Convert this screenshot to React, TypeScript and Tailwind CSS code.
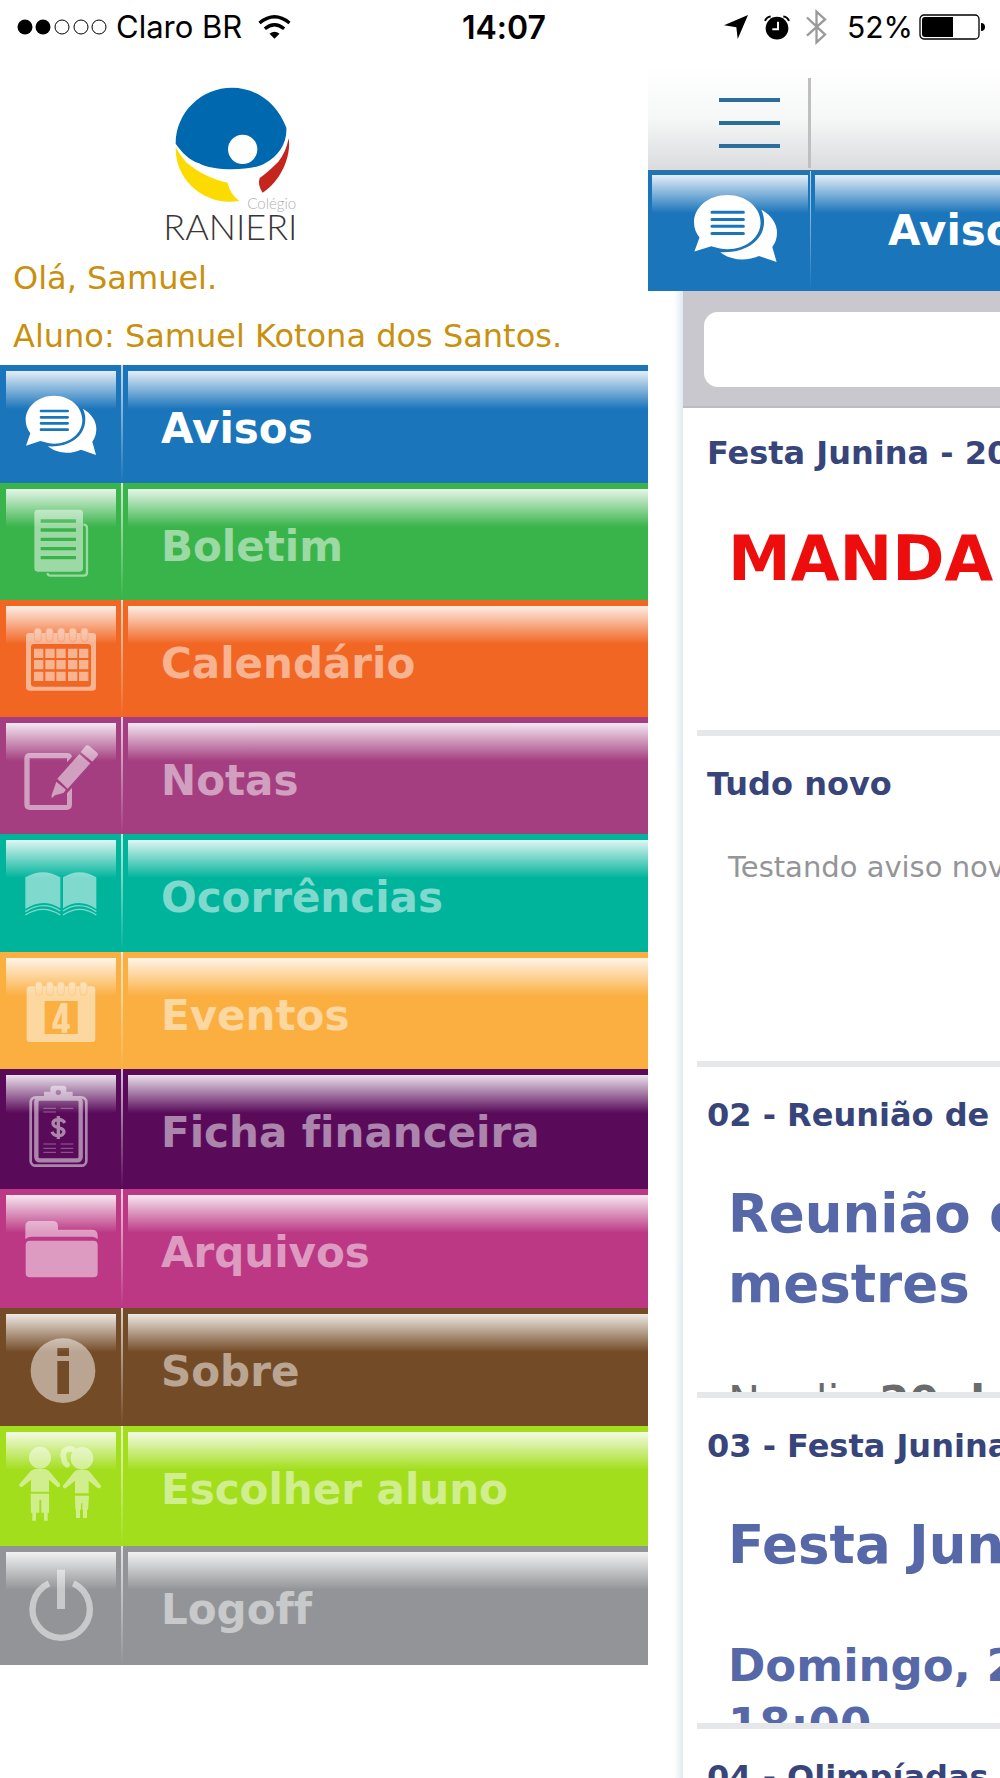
import type { ReactNode } from "react";

function ChatIcon({ line }: { line: string }) {
  return (
    <>
      <path
        fill="#fff"
        d="M162 107C210 107 247 140 247 180S210 251 162 251C151 251 138 248 121 243L78 257L91 220C82 208 77 195 77 180C77 140 114 107 162 107Z"
      />
      <path
        fill="#fff"
        d="M249 146C274 160 289 183 289 207C289 222 285 234 277 245L288 285L243 269C211 284 170 281 144 259C200 263 245 236 254 195C258 178 256 162 249 146Z"
      />
      <path stroke={line} strokeWidth="8" strokeLinecap="round" d="M123 153H203M123 172H203M123 190H203M123 209H203" />
    </>
  );
}

function Rings({ xs, y, stroke }: { xs: number[]; y: number; stroke: string }) {
  return (
    <>
      {xs.map((x) => (
        <rect key={x} x={x} y={y} width="21" height="40" rx="10" fill="#fff" stroke={stroke} strokeWidth="3" />
      ))}
    </>
  );
}

type Item = {
  label: string;
  color: string;
  height: string;
  viewBox: string;
  active?: boolean;
  icon: ReactNode;
};

const items: Item[] = [
  {
    label: "Avisos",
    color: "bg-[#1b75bb]",
    height: "h-[118px]",
    viewBox: "18 33 330 330",
    active: true,
    icon: <ChatIcon line="#1b75bb" />,
  },
  {
    label: "Boletim",
    color: "bg-[#39b44a]",
    height: "h-[117px]",
    viewBox: "18 387 330 330",
    icon: (
      <>
        <path
          fill="#fff"
          fillRule="evenodd"
          d="M113 449H239Q249 449 249 459V625Q249 635 239 635H113Q103 635 103 625V459Q103 449 113 449ZM122 478V488H228V478ZM122 505V515H228V505ZM122 533V543H228V533ZM122 561V571H228V561ZM122 588V598H228V588Z"
        />
        <path fill="none" stroke="#fff" strokeWidth="7" d="M250 494Q261 494 261 504V637Q261 647 251 647H151Q143 647 143 639" />
      </>
    ),
  },
  {
    label: "Calendário",
    color: "bg-[#f26623]",
    height: "h-[117px]",
    viewBox: "18 737 330 330",
    icon: (
      <>
        <path
          fill="#fff"
          fillRule="evenodd"
          d="M88 818H278Q288 818 288 828V981Q288 991 278 991H88Q78 991 78 981V828Q78 818 88 818ZM102 851Q93 851 93 860V970Q93 979 102 979H264Q273 979 273 970V860Q273 851 264 851Z"
        />
        <Rings xs={[103, 138, 173, 208, 243]} y={804} stroke="#fbd0b8" />
        <path
          fill="#fff"
          d="M102 865h28v28h-28zM136 865h28v28h-28zM169 865h28v28h-28zM204 865h28v28h-28zM237 865h28v28h-28zM102 899h28v28h-28zM136 899h28v28h-28zM169 899h28v28h-28zM204 899h28v28h-28zM237 899h28v28h-28zM102 934h28v28h-28zM136 934h28v28h-28zM169 934h28v28h-28zM204 934h28v28h-28zM237 934h28v28h-28z"
        />
      </>
    ),
  },
  {
    label: "Notas",
    color: "bg-[#a43e80]",
    height: "h-[117px]",
    viewBox: "18 24 330 330",
    icon: (
      <>
        <path
          fill="#fff"
          d="M90 114H202Q214 114 216 125L201 142V130H89V270H201V235L216 218V268Q216 285 199 285H90Q73 285 73 268V131Q73 114 90 114Z"
        />
        <path
          fill="#fff"
          d="M238 117L271 145L203 221L172 191ZM242 111L255 95Q261 87 269 94L290 112Q297 118 291 124L277 140ZM169 200L198 224L190 234L165 241L155 250V240Z"
        />
      </>
    ),
  },
  {
    label: "Ocorrências",
    color: "bg-[#00b49c]",
    height: "h-[118px]",
    viewBox: "18 375 330 330",
    icon: (
      <>
        <path fill="#fff" d="M76 487Q129 456 181 487V580Q129 547 76 582ZM189 487Q239 456 289 487V582Q239 547 189 580Z" />
        <path
          fill="none"
          stroke="#fff"
          strokeWidth="4"
          d="M76 590Q129 555 181 588M76 600Q129 566 181 600M189 588Q239 555 289 590M189 600Q239 566 289 600"
        />
      </>
    ),
  },
  {
    label: "Eventos",
    color: "bg-[#fbaf41]",
    height: "h-[117px]",
    viewBox: "18 729 330 330",
    icon: (
      <>
        <path
          fill="#fff"
          fillRule="evenodd"
          d="M90 814H276Q286 814 286 824V971Q286 981 276 981H90Q80 981 80 971V824Q80 814 90 814ZM134 858V957H233V858Z"
        />
        <Rings xs={[106, 139, 172, 206, 240]} y={801} stroke="#fde3bb" />
        <path fill="#fff" fillRule="evenodd" d="M182 864H202V928H209V941H202V953H185V941H157V926ZM185 892L171 928H185Z" />
      </>
    ),
  },
  {
    label: "Ficha financeira",
    color: "bg-[#590b5a]",
    height: "h-[120px]",
    viewBox: "18 45 330 330",
    icon: (
      <>
        <rect x="92" y="112" width="167" height="205" rx="15" fill="none" stroke="#fff" strokeWidth="8" />
        <rect x="109" y="116" width="133" height="185" rx="10" fill="none" stroke="#fff" strokeWidth="13" />
        <path
          fill="#fff"
          fillRule="evenodd"
          d="M132 120V95H151V85Q152 77 160 77H190Q198 77 199 85V95H218V120ZM175 89A8 8 0 1 0 175 105A8 8 0 1 0 175 89Z"
        />
        <path
          stroke="#fff"
          strokeWidth="3"
          opacity=".7"
          d="M130 145H168M182 145H220M130 156H168M130 252H168M182 252H220M130 265H168M182 265H220M130 277H168M182 277H220"
        />
        <path
          fill="none"
          stroke="#fff"
          strokeWidth="10"
          d="M194 189Q189 178 175 178Q159 179 159 190Q160 199 175 203Q192 207 192 216Q190 227 175 227Q160 227 156 215M175 168V237"
        />
      </>
    ),
  },
  {
    label: "Arquivos",
    color: "bg-[#bc3784]",
    height: "h-[119px]",
    viewBox: "18 405 330 330",
    icon: (
      <path
        fill="#fff"
        d="M76 538V499Q76 483 92 483H158Q174 483 174 499V509H276Q293 509 293 526V538Q287 530 277 530H93Q82 530 76 538ZM90 542H280Q293 542 293 555V639Q293 652 280 652H90Q77 652 77 639V555Q77 542 90 542Z"
      />
    ),
  },
  {
    label: "Sobre",
    color: "bg-[#744b27]",
    height: "h-[118px]",
    viewBox: "18 765 330 330",
    icon: (
      <path
        fill="#fff"
        fillRule="evenodd"
        d="M189 838A97 97 0 1 0 189 1032A97 97 0 1 0 189 838ZM172 867H207V891H172ZM172 906H207V1005H172Z"
      />
    ),
  },
  {
    label: "Escolher aluno",
    color: "bg-[#a3de1d]",
    height: "h-[120px]",
    viewBox: "18 97 330 330",
    icon: (
      <>
        <circle cx="120" cy="174" r="33" fill="#fff" />
        <circle cx="246" cy="176" r="34" fill="#fff" />
        <path fill="none" stroke="#fff" strokeWidth="17" strokeLinecap="round" d="M218 149Q203 145 193 154Q186 166 192 177Q191 187 201 195" />
        <path
          fill="#fff"
          d="M106 208H134Q142 209 147 214L180 253Q182 262 172 262L147 240V276H93V240L66 262Q56 262 58 254L92 214Q98 209 106 208ZM92 282H147V339H143V363H132V339H124V300H118V339H108V363H97V339H93Z"
        />
        <path
          fill="#fff"
          d="M234 211H258Q264 211 269 216L303 258Q303 267 294 266L266 243V281H225V243L197 266Q187 266 189 258L223 216Q228 211 234 211ZM225 288H267L264 330H261V355H249V330H247V311H243V330H240V355H228V330H226Z"
        />
      </>
    ),
  },
  {
    label: "Logoff",
    color: "bg-[#929497]",
    height: "h-[119px]",
    viewBox: "18 456 330 330",
    icon: (
      <>
        <path fill="#fff" d="M171 509H195V627H171Z" />
        <path fill="none" stroke="#fff" strokeWidth="19" d="M147 550A86 86 0 1 0 220 550" />
      </>
    ),
  },
];

const gloss = "bg-[linear-gradient(rgba(255,255,255,0.88),rgba(255,255,255,0)_38px)]";
const divider = "bg-[linear-gradient(rgba(255,255,255,0.75),rgba(255,255,255,0))]";

function MenuRow({ item }: { item: Item }) {
  const tone = item.active ? "opacity-100" : "opacity-50";
  return (
    <li>
      <a href="#" className={`flex overflow-hidden ${item.height} ${item.color}`}>
        <span className={`mt-1.5 ml-1.5 w-[110px] shrink-0 ${gloss}`}>
          <svg viewBox={item.viewBox} className={`size-[110px] ${tone}`} aria-hidden="true">
            {item.icon}
          </svg>
        </span>
        <span className={`mx-[5px] w-[2px] shrink-0 ${divider}`} />
        <span className={`mt-1.5 min-w-0 flex-1 pt-7 pl-[33px] text-[42px] leading-[60px] font-bold whitespace-nowrap text-white ${gloss}`}>
          <span className={tone}>{item.label}</span>
        </span>
      </a>
    </li>
  );
}

function StatusBar() {
  return (
    <header className="grid h-[66px] grid-cols-[1fr_auto_1fr] items-start pt-2 pr-[15px] pl-[17px] font-[Inter,sans-serif] leading-[38px] text-black">
      <div className="flex items-center text-[31px]">
        <svg viewBox="0 0 91 16" className="h-4 w-[91px]" aria-label="Sinal">
          <circle cx="8" cy="8" r="7.5" />
          <circle cx="26" cy="8" r="7.5" />
          <g fill="none" stroke="#000">
            <circle cx="45" cy="8" r="7" />
            <circle cx="64" cy="8" r="7" />
            <circle cx="82" cy="8" r="7" />
          </g>
        </svg>
        <span className="ml-2 whitespace-nowrap">Claro BR</span>
        <svg viewBox="0 0 98 72" className="ml-4 h-6 w-[33px]" aria-label="Wi-Fi">
          <g fill="none" stroke="#000" strokeWidth="10">
            <path d="M4 24Q49 -13 94 24" />
            <path d="M20 41Q49 17 78 41" />
          </g>
          <path d="M34 56Q49 44 64 56L49 71Z" />
        </svg>
      </div>
      <time className="pt-px pl-1.5 text-[32px] font-semibold">14:07</time>
      <div className="flex items-center justify-end text-[30px]">
        <svg viewBox="0 0 70 70" className="size-6" aria-hidden="true">
          <path d="M70 0L40 70L36 36L0 30Z" />
        </svg>
        <svg viewBox="0 0 78 74" className="ml-4 h-[25px] w-[26px]" aria-hidden="true">
          <circle cx="39" cy="39" r="34" />
          <path fill="none" stroke="#000" strokeWidth="6" d="M3 17Q8 5 20 4M58 4Q70 5 75 17" />
          <path fill="none" stroke="#fff" strokeWidth="6" d="M42 20V42H25" />
        </svg>
        <svg viewBox="0 0 64 108" className="ml-4 h-9 w-[21px]" aria-hidden="true">
          <path fill="none" stroke="#9a9a9a" strokeWidth="7" d="M3 25L58 77L32 101V7L58 31L3 80" />
        </svg>
        <span className="ml-5">52%</span>
        <svg viewBox="0 0 66 26" className="ml-1.5 h-[26px] w-[66px]" aria-label="Bateria">
          <rect x="1" y="1" width="59" height="24" rx="4" fill="none" stroke="#000" strokeWidth="1.3" />
          <path d="M6 3H34V23H6Q3 23 3 20V6Q3 3 6 3ZM62 9Q66 9 66 13T62 17Z" />
        </svg>
      </div>
    </header>
  );
}

function Logo() {
  return (
    <svg viewBox="45 50 405 465" className="ml-[165px] h-[155px] w-[135px]" role="img" aria-label="Colégio Ranieri">
      <path
        fill="#0068ae"
        d="M246 52C315 52 380 95 409 172C412 218 386 257 345 279C310 302 190 304 147 279C116 268 96 247 77 220C77 125 155 52 246 52Z"
      />
      <circle cx="278" cy="237" r="44" fill="#fff" />
      <path fill="#fcdc00" d="M77 231C86 247 98 263 108 276C145 306 185 327 233 337Q239 369 268 392C170 409 75 335 77 231Z" />
      <path fill="#c4261d" d="M416 204C425 260 390 335 338 367Q322 345 329 323Q352 307 385 274Q408 246 416 204Z" />
      <text x="292" y="415" fontSize="45" fill="#b0b0b0" fontFamily="Lato, sans-serif" fontWeight="300">
        Colégio
      </text>
      <text x="40" y="508" fontSize="108" fill="#3a3436" fontFamily="Lato, sans-serif" fontWeight="300">
        RANIERI
      </text>
    </svg>
  );
}

function Notice({ title, children }: { title: string; children: ReactNode }) {
  return (
    <article className="h-[331px] overflow-hidden border-b-[6px] border-[#e6e7e8] pt-7 pl-[10px] whitespace-nowrap">
      <h2 className="text-[32px] leading-[40px] font-bold text-[#37457a]">{title}</h2>
      <div className="pt-11 pl-[21px]">{children}</div>
    </article>
  );
}

export default function App() {
  return (
    <div className="flex h-screen flex-col overflow-hidden bg-white font-['DejaVu_Sans',sans-serif] [font-variant-ligatures:none]">
      <StatusBar />
      <div className="grid min-h-0 flex-1 grid-cols-[minmax(0,648fr)_minmax(0,352fr)]">
        <aside className="overflow-hidden pt-[21px]">
          <Logo />
          <div className="pt-[7px] pl-[13px] text-[32px] leading-[58px] whitespace-nowrap text-[#c9900e]">
            <p>Olá, Samuel.</p>
            <p>Aluno: Samuel Kotona dos Santos.</p>
          </div>
          <nav aria-label="Menu">
            <ul>
              {items.map((item) => (
                <MenuRow key={item.label} item={item} />
              ))}
            </ul>
          </nav>
        </aside>

        <main className="flex min-w-0 flex-col overflow-hidden">
          <div className="flex h-[105px] shrink-0 border-b border-[#4a6a85] bg-linear-to-b from-white via-[#f6f7f7] to-[#dadbdd]">
            <button type="button" aria-label="Abrir menu" className="flex w-[160px] shrink-0 flex-col gap-[19px] pt-8 pl-[71px]">
              <span className="h-1 w-[61px] bg-[#2b6d9b]" />
              <span className="h-1 w-[61px] bg-[#2b6d9b]" />
              <span className="h-1 w-[61px] bg-[#2b6d9b]" />
            </button>
            <span className="mt-3 mb-0.5 w-[3px] shrink-0 bg-[#bfbfc0]" />
          </div>
          <div className="flex h-[120px] shrink-0 bg-[#1b75bb]">
            <span className={`mt-1 ml-1 w-[156px] shrink-0 ${gloss}`}>
              <svg viewBox="77 107 212 178" className="mt-5 ml-[42px] h-[67px] w-[83px]" preserveAspectRatio="none" aria-hidden="true">
                <ChatIcon line="#1b75bb" />
              </svg>
            </span>
            <span className={`mr-1 ml-[2px] w-px shrink-0 ${divider}`} />
            <h1 className={`mt-1 min-w-0 flex-1 overflow-hidden pt-[26px] pl-[73px] text-[42px] leading-[60px] font-bold whitespace-nowrap text-white ${gloss}`}>
              Avisos
            </h1>
          </div>
          <div className="flex min-h-0 flex-1">
            <div className="w-[35px] shrink-0 bg-[linear-gradient(to_right,#fff_26px,#e0eaf0)]" />
            <div className="min-w-0 flex-1 overflow-hidden">
              <div className="-mb-[3px] h-[117px] overflow-hidden border-b-2 border-[#bcbcbf] bg-[#c9c8ce] pt-[21px] pl-[21px]">
                <input type="search" aria-label="Buscar avisos" className="block h-[75px] w-full rounded-l-[14px] bg-white px-4 text-[32px] outline-none" />
              </div>
              <div className="pl-[14px]">
                <Notice title="Festa Junina - 20">
                  <p className="text-[63px] leading-[84px] font-bold text-[#ee0d0d]">MANDA</p>
                </Notice>
                <Notice title="Tudo novo">
                  <p className="text-[29px] leading-[38px] text-[#939598]">Testando aviso novo</p>
                </Notice>
                <Notice title="02 - Reunião de">
                  <p className="text-[53px] leading-[70px] font-bold text-[#5668a8]">
                    Reunião de
                    <br />
                    mestres
                  </p>
                  <p className="pt-[54px] text-[43px] leading-[57px] text-[#6b6b6b]">
                    No dia <strong>20 de</strong>
                  </p>
                </Notice>
                <Notice title="03 - Festa Junina">
                  <p className="text-[53px] leading-[70px] font-bold text-[#5668a8]">Festa Junina</p>
                  <p className="pt-14 text-[45px] leading-[59px] font-bold text-[#5668a8]">
                    Domingo, 2
                    <br />
                    18:00
                  </p>
                </Notice>
                <Notice title="04 - Olimpíadas">{null}</Notice>
              </div>
            </div>
          </div>
        </main>
      </div>
    </div>
  );
}
